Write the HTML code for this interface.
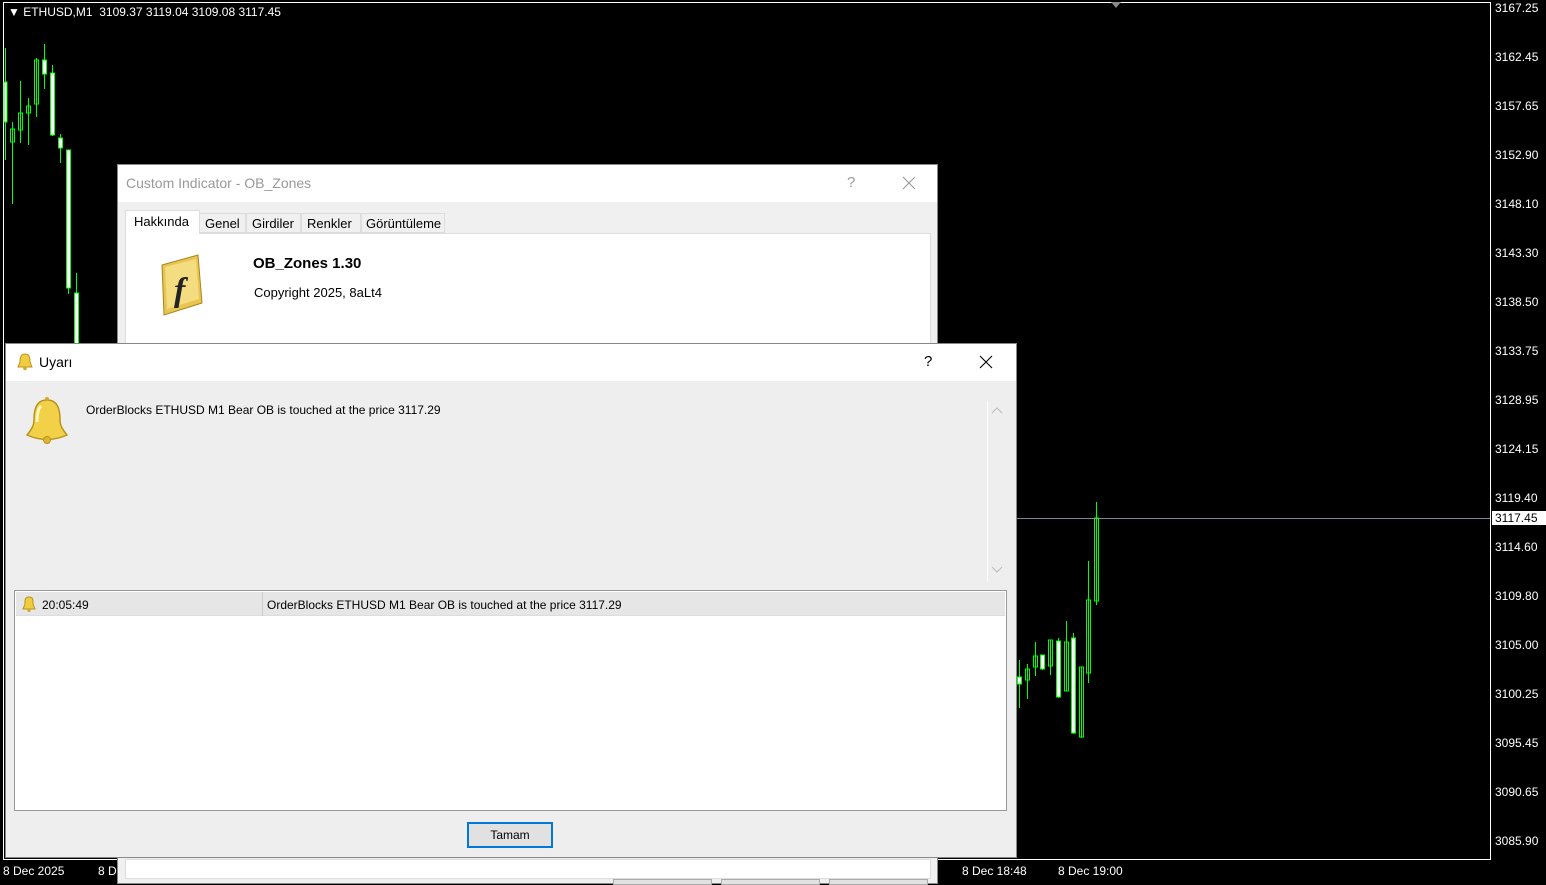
<!DOCTYPE html>
<html><head><meta charset="utf-8"><style>
*{margin:0;padding:0;box-sizing:border-box}
body{width:1546px;height:882px;background:#000;position:relative;overflow:hidden;font-family:"Liberation Sans","DejaVu Sans",sans-serif;font-size:12px}
.ab{position:absolute}
.pl{position:absolute;left:1495px;color:#fff;font-size:12px;line-height:14px}
.dt{position:absolute;top:864px;color:#fff;font-size:12px}
</style></head><body>
<div class="ab" style="left:3px;top:2px;width:1488px;height:858px;border:1px solid #fff;"></div>
<div class="ab" style="left:8px;top:5px;color:#fff;font-size:12px">&#9660; ETHUSD,M1&nbsp; 3109.37 3119.04 3109.08 3117.45</div>
<div class="ab" style="left:1111px;top:2px;width:0;height:0;border-left:5px solid transparent;border-right:5px solid transparent;border-top:6px solid #888"></div>
<div class="pl" style="top:1px">3167.25</div>
<div class="pl" style="top:50px">3162.45</div>
<div class="pl" style="top:99px">3157.65</div>
<div class="pl" style="top:148px">3152.90</div>
<div class="pl" style="top:197px">3148.10</div>
<div class="pl" style="top:246px">3143.30</div>
<div class="pl" style="top:295px">3138.50</div>
<div class="pl" style="top:344px">3133.75</div>
<div class="pl" style="top:393px">3128.95</div>
<div class="pl" style="top:442px">3124.15</div>
<div class="pl" style="top:491px">3119.40</div>
<div class="ab" style="left:1492px;top:511px;width:54px;height:14px;background:#fff;color:#000;padding-left:3px;line-height:14px">3117.45</div>
<div class="pl" style="top:540px">3114.60</div>
<div class="pl" style="top:589px">3109.80</div>
<div class="pl" style="top:638px">3105.00</div>
<div class="pl" style="top:687px">3100.25</div>
<div class="pl" style="top:736px">3095.45</div>
<div class="pl" style="top:785px">3090.65</div>
<div class="pl" style="top:834px">3085.90</div>
<div class="dt" style="left:3px">8 Dec 2025</div>
<div class="dt" style="left:98px">8 D</div>
<div class="dt" style="left:962px">8 Dec 18:48</div>
<div class="dt" style="left:1058px">8 Dec 19:00</div>
<svg class="ab" style="left:0;top:0" width="1546" height="882">
<line x1="1016" y1="518.5" x2="1490" y2="518.5" stroke="#778899"/>
<g stroke="#00ff00" stroke-width="1" fill="#fff" shape-rendering="crispEdges">
<line x1="5.5" y1="48" x2="5.5" y2="160"/><rect x="4" y="82" width="3" height="40"/>
<line x1="12.5" y1="122" x2="12.5" y2="204"/><rect x="10.5" y="129" width="4" height="13" fill="none"/>
<line x1="20.5" y1="81" x2="20.5" y2="143"/><rect x="18.5" y="113" width="4" height="17" fill="none"/>
<line x1="28.5" y1="98" x2="28.5" y2="145"/><rect x="26.5" y="106" width="4" height="7" fill="none"/>
<line x1="36.5" y1="58" x2="36.5" y2="117"/><rect x="34.5" y="60" width="4" height="44" fill="none"/>
<line x1="44.5" y1="44" x2="44.5" y2="89"/><rect x="42.5" y="60" width="4" height="14"/>
<line x1="52.5" y1="65" x2="52.5" y2="136"/><rect x="50.5" y="73" width="4" height="62"/>
<line x1="60.5" y1="134" x2="60.5" y2="163"/><rect x="58.5" y="138" width="4" height="10"/>
<line x1="68.5" y1="150" x2="68.5" y2="294"/><rect x="66.5" y="150" width="4" height="138"/>
<line x1="76.5" y1="273" x2="76.5" y2="345"/><rect x="74.5" y="293" width="4" height="52"/>
<line x1="1019.5" y1="660" x2="1019.5" y2="708"/><rect x="1017.5" y="677" width="4" height="7"/>
<line x1="1027.5" y1="664" x2="1027.5" y2="699"/><rect x="1025.5" y="669" width="4" height="11" fill="none"/>
<line x1="1035.5" y1="642" x2="1035.5" y2="676"/><rect x="1033.5" y="656" width="4" height="11" fill="none"/>
<line x1="1042.5" y1="655" x2="1042.5" y2="670"/><rect x="1040.5" y="655" width="4" height="14"/>
<line x1="1050.5" y1="640" x2="1050.5" y2="675"/><rect x="1048.5" y="640" width="4" height="26" fill="none"/>
<line x1="1058.5" y1="638" x2="1058.5" y2="698"/><rect x="1056.5" y="641" width="4" height="56"/>
<line x1="1066.5" y1="621" x2="1066.5" y2="691"/><rect x="1064.5" y="642" width="4" height="49" fill="none"/>
<line x1="1073.5" y1="633" x2="1073.5" y2="734"/><rect x="1071.5" y="638" width="4" height="95"/>
<line x1="1081.5" y1="667" x2="1081.5" y2="738"/><rect x="1079.5" y="667" width="4" height="70" fill="none"/>
<line x1="1088.5" y1="561" x2="1088.5" y2="683"/><rect x="1086.5" y="600" width="4" height="73" fill="none"/>
<line x1="1096.5" y1="502" x2="1096.5" y2="605"/><rect x="1094.5" y="518" width="4" height="83" fill="none"/>
</g></svg>

<!-- dialog 1 -->
<div class="ab" style="left:117px;top:164px;width:821px;height:720px;background:#f0f0f0;border:1px solid #888">
 <div class="ab" style="left:0;top:0;width:819px;height:37px;background:#fff"></div>
 <div class="ab" style="left:8px;top:10px;font-size:14px;color:#999">Custom Indicator - OB_Zones</div>
 <div class="ab" style="left:729px;top:9px;font-size:15px;color:#999">?</div>
 <svg class="ab" style="left:784px;top:11px" width="14" height="14"><path d="M1 1L13 13M13 1L1 13" stroke="#999" stroke-width="1.1"/></svg>
 <div class="ab" style="left:7px;top:68px;width:806px;height:120px;background:#fff;border:1px solid #ddd"></div>
 <div class="ab" style="left:7px;top:45px;width:75px;height:24px;background:#fff;border:1px solid #ddd;border-bottom:none;padding:3px 0 0 8px;font-size:13px;color:#000">Hakkında</div>
 <div class="ab" style="left:81px;top:48px;width:47px;height:20px;background:#f0f0f0;border:1px solid #ddd;padding:2px 0 0 5px;font-size:13px">Genel</div>
 <div class="ab" style="left:128px;top:48px;width:55px;height:20px;border:1px solid #ddd;padding:2px 0 0 5px;font-size:13px">Girdiler</div>
 <div class="ab" style="left:183px;top:48px;width:60px;height:20px;border:1px solid #ddd;padding:2px 0 0 5px;font-size:13px">Renkler</div>
 <div class="ab" style="left:243px;top:48px;width:84px;height:20px;border:1px solid #ddd;padding:2px 0 0 4px;font-size:13px">Görüntüleme</div>
 <svg class="ab" style="left:38px;top:86px" width="50" height="70"><path d="M6 14 L42 4 L46 52 L8 64 Z" fill="#e8c550" stroke="#a88420"/><path d="M9 16 L40 8 L43 48 L11 58 Z" fill="#f4dc80"/><text x="18" y="50" font-family="Liberation Serif,serif" font-style="italic" font-weight="bold" font-size="34" fill="#222">f</text></svg>
 <div class="ab" style="left:135px;top:90px;font-size:15px;font-weight:bold;color:#000">OB_Zones 1.30</div>
 <div class="ab" style="left:136px;top:120px;font-size:13px;color:#000">Copyright 2025, 8aLt4</div>
 <div class="ab" style="left:7px;top:694px;width:806px;height:20px;background:#fff;border:1px solid #ddd"></div>
 <div class="ab" style="left:495px;top:714px;width:99px;height:6px;border:1px solid #aaa;background:#e1e1e1"></div>
 <div class="ab" style="left:603px;top:714px;width:99px;height:6px;border:1px solid #aaa;background:#e1e1e1"></div>
 <div class="ab" style="left:711px;top:714px;width:99px;height:6px;border:1px solid #aaa;background:#e1e1e1"></div>
</div>

<!-- dialog 2 -->
<div class="ab" style="left:5px;top:343px;width:1012px;height:515px;background:#eeeeee;border:1px solid #888">
 <div class="ab" style="left:0;top:0;width:1010px;height:37px;background:#fff"></div>
 <svg class="ab" style="left:10px;top:9px" width="18" height="18"><path d="M9 1 C4 1 4 6 4 9 L2 14 L16 14 L14 9 C14 6 14 1 9 1Z" fill="#f0cc40" stroke="#b8941a"/><circle cx="9" cy="15.5" r="1.8" fill="#d4a82a"/></svg>
 <div class="ab" style="left:33px;top:10px;font-size:14px;color:#000">Uyarı</div>
 <div class="ab" style="left:918px;top:9px;font-size:15px;color:#000">?</div>
 <svg class="ab" style="left:973px;top:11px" width="14" height="14"><path d="M1 1L13 13M13 1L1 13" stroke="#000" stroke-width="1.1"/></svg>
 <svg class="ab" style="left:15px;top:50px" width="52" height="54"><path d="M26 6 C14 6 13 18 13 26 C13 32 10 36 6 41 Q26 50 46 41 C42 36 39 32 39 26 C39 18 38 6 26 6Z" fill="#f2d048" stroke="#b8941a" stroke-width="1.5"/><path d="M20 12 C16 16 16 24 16 28" stroke="#fff6c0" stroke-width="3" fill="none"/><circle cx="26" cy="46" r="3.5" fill="#e0b432" stroke="#b8941a"/><circle cx="26" cy="5" r="2" fill="#d4a82a"/></svg>
 <div class="ab" style="left:80px;top:59px;font-size:12px;color:#000">OrderBlocks ETHUSD M1 Bear OB is touched at the price 3117.29</div>
 <div class="ab" style="left:981px;top:57px;width:1px;height:180px;background:#fff"></div>
 <svg class="ab" style="left:985px;top:63px" width="12" height="8"><path d="M1 6L6 1L11 6" stroke="#bbb" fill="none"/></svg>
 <svg class="ab" style="left:985px;top:222px" width="12" height="8"><path d="M1 1L6 6L11 1" stroke="#bbb" fill="none"/></svg>
 <div class="ab" style="left:8px;top:246px;width:993px;height:221px;background:#fff;border:1px solid #999">
  <div class="ab" style="left:1px;top:1px;width:989px;height:24px;background:#e6e6e6;border-bottom:1px solid #ddd"></div>
  <div class="ab" style="left:247px;top:1px;width:1px;height:24px;background:#ccc"></div>
  <svg class="ab" style="left:6px;top:5px" width="16" height="17"><path d="M8 1 C3 1 4 6 4 8 L2 13 L14 13 L12 8 C12 6 13 1 8 1Z" fill="#f0cc40" stroke="#b8941a"/><circle cx="8" cy="14.5" r="1.6" fill="#d4a82a"/></svg>
  <div class="ab" style="left:27px;top:7px;font-size:12px">20:05:49</div>
  <div class="ab" style="left:252px;top:7px;font-size:12px">OrderBlocks ETHUSD M1 Bear OB is touched at the price 3117.29</div>
 </div>
 <div class="ab" style="left:461px;top:478px;width:86px;height:26px;border:2px solid #0078d7;background:#e1e1e1;text-align:center;line-height:22px;font-size:12px">Tamam</div>
</div>
</body></html>
